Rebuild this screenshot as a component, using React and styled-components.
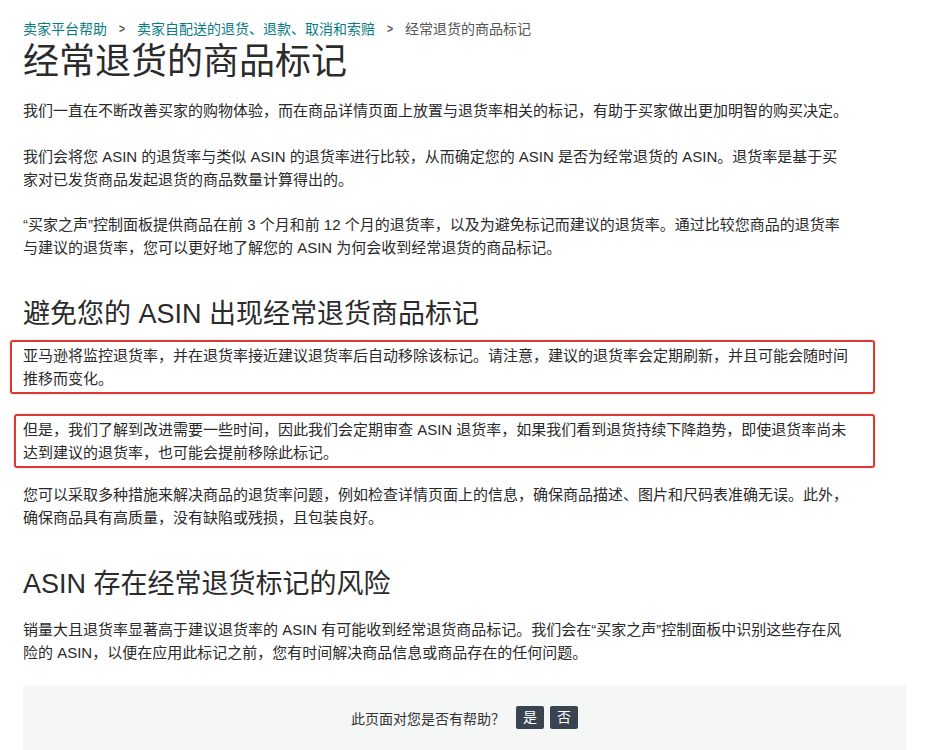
import React from "react";
import styled, { createGlobalStyle } from "styled-components";

const GlobalStyle = createGlobalStyle`
  html, body {
    margin: 0;
    padding: 0;
    background: #ffffff;
  }
  body {
    font-family: "Liberation Sans", "Noto Sans CJK SC", sans-serif;
    color: #222;
  }
`;

const Page = styled.main`
  width: 829px;
  padding: 19px 0 0 23px;
`;

const Breadcrumb = styled.nav`
  display: flex;
  align-items: center;
  font-size: 14px;
  line-height: 20px;
  height: 20px;
`;

const Crumb = styled.a`
  color: ${(props) => (props.$current ? "#555" : "#0a7b83")};
  text-decoration: none;
`;

const Chevron = styled.span`
  display: inline-block;
  width: 30px;
  text-align: center;
  color: #555;
  font-size: 13px;
  font-weight: bold;
  transform: scaleX(0.8);
`;

const Title = styled.h1`
  margin: 1px 0 0;
  font-size: 36px;
  line-height: 44px;
  font-weight: 400;
  color: #2b2b2b;
`;

const Heading = styled.h2`
  margin: ${(props) => props.$top}px 0 0;
  font-size: 27px;
  line-height: 36px;
  font-weight: 400;
  color: #2b2b2b;
`;

const P = styled.p`
  margin: ${(props) => props.$top ?? 23}px 0 0;
  font-size: 15px;
  line-height: 23px;
  color: #2a2a2a;
`;

const Highlight = styled.div`
  margin: ${(props) => props.$top}px -23px 0 ${(props) => -props.$left}px;
  padding: 2px 21px 2px ${(props) => props.$left - 2}px;
  border: 2px solid #d93a33;
  border-radius: 3px;
  box-shadow: 0 0 2px rgba(217, 58, 51, 0.35);

  ${P} {
    margin: 0;
  }
`;

const Feedback = styled.section`
  margin: 21px -54px 0 0;
  height: 65px;
  background: #f5f6f6;
  display: flex;
  align-items: center;
  justify-content: center;
  gap: 6px;
  font-size: 14px;
  color: #333;
`;

const Question = styled.span`
  margin-right: 5px;
`;

const VoteButton = styled.button`
  width: 28px;
  height: 23px;
  padding: 0;
  border: none;
  border-radius: 2px;
  background: #3a4451;
  color: #fff;
  font-family: inherit;
  font-size: 14px;
  line-height: 23px;
  cursor: pointer;
`;

export default function App() {
  return (
    <>
      <GlobalStyle />
      <Page>
        <Breadcrumb>
          <Crumb href="#">卖家平台帮助</Crumb>
          <Chevron>&gt;</Chevron>
          <Crumb href="#">卖家自配送的退货、退款、取消和索赔</Crumb>
          <Chevron>&gt;</Chevron>
          <Crumb $current>经常退货的商品标记</Crumb>
        </Breadcrumb>
        <Title>经常退货的商品标记</Title>
        <P $top={15}>
          我们一直在不断改善买家的购物体验，而在商品详情页面上放置与退货率相关的标记，有助于买家做出更加明智的购买决定。
        </P>
        <P>
          我们会将您 ASIN 的退货率与类似 ASIN 的退货率进行比较，从而确定您的 ASIN 是否为经常退货的 ASIN。退货率是基于买家对已发货商品发起退货的商品数量计算得出的。
        </P>
        <P $top={22}>
          “买家之声”控制面板提供商品在前 3 个月和前 12 个月的退货率，以及为避免标记而建议的退货率。通过比较您商品的退货率与建议的退货率，您可以更好地了解您的 ASIN 为何会收到经常退货的商品标记。
        </P>

        <Heading $top={37}>避免您的 ASIN 出现经常退货商品标记</Heading>
        <Highlight $top={8} $left={13}>
          <P>
            亚马逊将监控退货率，并在退货率接近建议退货率后自动移除该标记。请注意，建议的退货率会定期刷新，并且可能会随时间推移而变化。
          </P>
        </Highlight>
        <Highlight $top={20} $left={9}>
          <P>
            但是，我们了解到改进需要一些时间，因此我们会定期审查 ASIN 退货率，如果我们看到退货持续下降趋势，即使退货率尚未达到建议的退货率，也可能会提前移除此标记。
          </P>
        </Highlight>
        <P $top={15}>
          您可以采取多种措施来解决商品的退货率问题，例如检查详情页面上的信息，确保商品描述、图片和尺码表准确无误。此外，确保商品具有高质量，没有缺陷或残损，且包装良好。
        </P>

        <Heading $top={37}>ASIN 存在经常退货标记的风险</Heading>
        <P $top={16}>
          销量大且退货率显著高于建议退货率的 ASIN 有可能收到经常退货商品标记。我们会在“买家之声”控制面板中识别这些存在风险的 ASIN，以便在应用此标记之前，您有时间解决商品信息或商品存在的任何问题。
        </P>

        <Feedback>
          <Question>此页面对您是否有帮助？</Question>
          <VoteButton>是</VoteButton>
          <VoteButton>否</VoteButton>
        </Feedback>
      </Page>
    </>
  );
}
